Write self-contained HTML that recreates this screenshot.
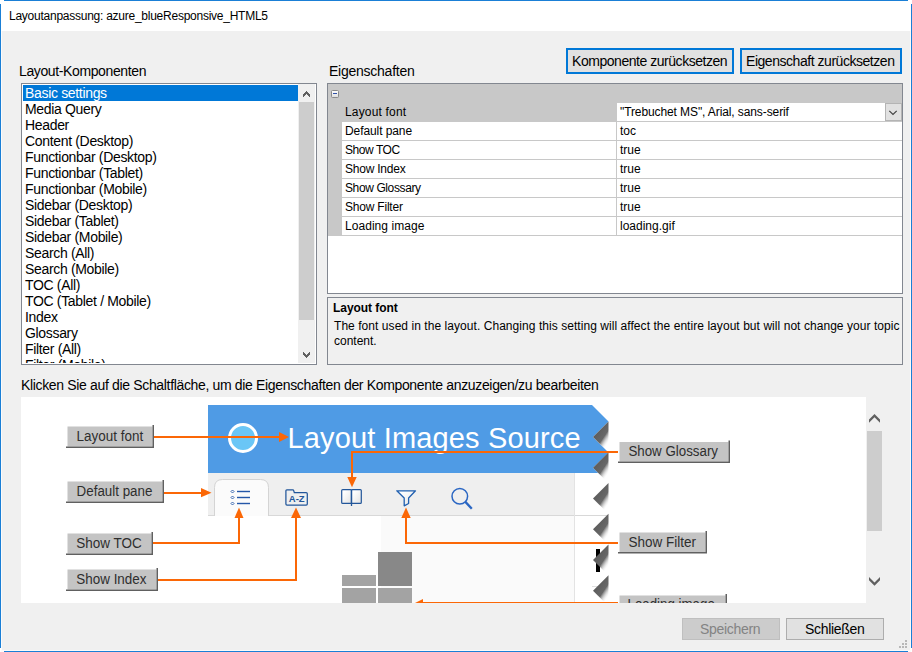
<!DOCTYPE html>
<html><head><meta charset="utf-8">
<style>
*{margin:0;padding:0;box-sizing:border-box}
html,body{width:912px;height:652px;overflow:hidden;background:#f0f0f0}
body{position:relative;font-family:"Liberation Sans",sans-serif;color:#000}
.a{position:absolute}
.t{position:absolute;white-space:pre}
.s12{font-size:12px;line-height:12px}
.s13{font-size:13px;line-height:13px}
.s135{font-size:14px;line-height:14px}
.btn{position:absolute;background:#e1e1e1;border:1px solid #adadad}
.lb{position:absolute;white-space:pre;font-size:14px;line-height:16px;height:16px;left:25px;letter-spacing:-0.33px}
.pr{position:absolute;left:342px;width:560px;height:18px;background:#fff}
.pn{position:absolute;white-space:pre;font-size:12px;line-height:12px;left:345px}
.pv{position:absolute;white-space:pre;font-size:12px;line-height:12px;left:620px}
.lab{position:absolute;background:#c3c3c3;border-top:1px solid #e8e8e8;border-left:1px solid #e8e8e8;border-right:2px solid #5e5e5e;border-bottom:2px solid #5e5e5e;font-size:13px;color:#333;white-space:pre}
</style></head><body>
<!-- window frame -->
<div class="a" style="left:0;top:0;width:912px;height:31px;background:#fff"></div>
<div class="a" style="left:1px;top:31px;width:1px;height:620px;background:#fbfbfb"></div>
<div class="a" style="left:910px;top:31px;width:1px;height:620px;background:#fbfbfb"></div>
<div class="a" style="left:0;top:650px;width:912px;height:2px;background:#fbfbfb"></div>
<div class="a" style="left:0;top:648px;width:1px;height:4px;background:#fff"></div>
<div class="a" style="left:911px;top:648px;width:1px;height:4px;background:#fff"></div>
<div class="a" style="left:4px;top:0;width:904px;height:1px;background:#1a7fd6"></div>
<div class="a" style="left:4px;top:651px;width:904px;height:1px;background:#1a7fd6"></div>
<div class="a" style="left:0;top:4px;width:1px;height:644px;background:#1a7fd6"></div>
<div class="a" style="left:911px;top:4px;width:1px;height:644px;background:#1a7fd6"></div>
<div class="t s12" style="left:9px;top:10px;letter-spacing:-0.25px">Layoutanpassung: azure_blueResponsive_HTML5</div>

<!-- top labels -->
<div class="t s135" style="left:19px;top:64px;letter-spacing:-0.38px">Layout-Komponenten</div>
<div class="t s135" style="left:329px;top:64px;letter-spacing:-0.25px">Eigenschaften</div>

<!-- listbox -->
<div class="a" style="left:21px;top:83px;width:296px;height:282px;border:1px solid #828790;background:#fff;overflow:hidden">
  <div class="a" style="left:1px;top:1px;width:275px;height:16px;background:#0078d7"></div>
</div>
<div id="lbitems" class="a" style="left:0;top:0;width:320px;height:363px;overflow:hidden">
<div class="lb" style="top:85px;color:#fff">Basic settings</div>
<div class="lb" style="top:101px">Media Query</div>
<div class="lb" style="top:117px">Header</div>
<div class="lb" style="top:133px">Content (Desktop)</div>
<div class="lb" style="top:149px">Functionbar (Desktop)</div>
<div class="lb" style="top:165px">Functionbar (Tablet)</div>
<div class="lb" style="top:181px">Functionbar (Mobile)</div>
<div class="lb" style="top:197px">Sidebar (Desktop)</div>
<div class="lb" style="top:213px">Sidebar (Tablet)</div>
<div class="lb" style="top:229px">Sidebar (Mobile)</div>
<div class="lb" style="top:245px">Search (All)</div>
<div class="lb" style="top:261px">Search (Mobile)</div>
<div class="lb" style="top:277px">TOC (All)</div>
<div class="lb" style="top:293px">TOC (Tablet / Mobile)</div>
<div class="lb" style="top:309px">Index</div>
<div class="lb" style="top:325px">Glossary</div>
<div class="lb" style="top:341px">Filter (All)</div>
<div class="lb" style="top:357px">Filter (Mobile)</div>
</div>
<!-- listbox scrollbar -->
<div class="a" style="left:298px;top:84px;width:17px;height:279px;background:#f0f0f0"></div>
<div class="a" style="left:299px;top:102px;width:15px;height:218px;background:#cdcdcd"></div>
<svg class="a" style="left:298px;top:84px" width="17" height="279">
  <g fill="#606060" shape-rendering="crispEdges"><rect x="5" y="10" width="1" height="3"/><rect x="6" y="9" width="1" height="3"/><rect x="7" y="8" width="1" height="3"/><rect x="8" y="7" width="1" height="3"/><rect x="9" y="8" width="1" height="3"/><rect x="10" y="9" width="1" height="3"/><rect x="11" y="10" width="1" height="3"/><rect x="5" y="268" width="1" height="3"/><rect x="6" y="269" width="1" height="3"/><rect x="7" y="270" width="1" height="3"/><rect x="8" y="271" width="1" height="3"/><rect x="9" y="270" width="1" height="3"/><rect x="10" y="269" width="1" height="3"/><rect x="11" y="268" width="1" height="3"/></g>
</svg>

<!-- buttons top -->
<div class="btn" style="left:566px;top:48px;width:168px;height:26px;border:2px solid #0078d7"></div>
<div class="t s135" style="left:572px;top:54px;letter-spacing:-0.46px">Komponente zurücksetzen</div>
<div class="btn" style="left:740px;top:48px;width:162px;height:26px;border:2px solid #0078d7"></div>
<div class="t s135" style="left:746px;top:54px;letter-spacing:-0.46px">Eigenschaft zurücksetzen</div>

<!-- property grid -->
<div class="a" style="left:327px;top:83px;width:576px;height:211px;border:1px solid #828790;background:#fff"></div>
<div class="a" style="left:328px;top:84px;width:574px;height:152px;background:#c8c8c8"></div>
<svg class="a" style="left:330px;top:89px" width="10" height="10">
  <defs><linearGradient id="mg" x1="0" y1="0" x2="0" y2="1"><stop offset="0" stop-color="#fff"/><stop offset="1" stop-color="#dcdcdc"/></linearGradient></defs>
  <rect x="1.5" y="1.5" width="7" height="7" rx="1" fill="url(#mg)" stroke="#8a8a8a"/>
  <line x1="3" y1="4.5" x2="7" y2="4.5" stroke="#3050a8" stroke-width="1"/>
</svg>
<div class="a" style="left:617px;top:103px;width:285px;height:18px;background:#fff"></div>
<div class="pr" style="top:122px"></div>
<div class="pr" style="top:141px"></div>
<div class="pr" style="top:160px"></div>
<div class="pr" style="top:179px"></div>
<div class="pr" style="top:198px"></div>
<div class="pr" style="top:217px"></div>
<div class="a" style="left:616px;top:122px;width:1px;height:113px;background:#c8c8c8"></div>
<div class="pn" style="top:106px;letter-spacing:0.17px">Layout font</div>
<div class="pn" style="top:125px;letter-spacing:-0.09px">Default pane</div>
<div class="pn" style="top:144px;letter-spacing:-0.44px">Show TOC</div>
<div class="pn" style="top:163px;letter-spacing:-0.23px">Show Index</div>
<div class="pn" style="top:182px;letter-spacing:-0.39px">Show Glossary</div>
<div class="pn" style="top:201px;letter-spacing:-0.21px">Show Filter</div>
<div class="pn" style="top:220px;letter-spacing:0.05px">Loading image</div>
<div class="pv" style="top:106px;letter-spacing:-0.1px">"Trebuchet MS", Arial, sans-serif</div>
<div class="pv" style="top:125px">toc</div>
<div class="pv" style="top:144px">true</div>
<div class="pv" style="top:163px">true</div>
<div class="pv" style="top:182px">true</div>
<div class="pv" style="top:201px">true</div>
<div class="pv" style="top:220px">loading.gif</div>
<div class="a" style="left:885px;top:103px;width:17px;height:18px;background:#e1e1e1;border:1px solid #b4b4b4"></div>
<svg class="a" style="left:885px;top:103px" width="17" height="18">
  <polyline points="4.3,7.8 8,11.5 11.7,7.8" fill="none" stroke="#404040" stroke-width="1.15"/>
</svg>

<!-- description -->
<div class="a" style="left:327px;top:297px;width:576px;height:68px;border:1px solid #828790"></div>
<div class="t s12" style="left:333px;top:302px;font-weight:bold;letter-spacing:-0.05px">Layout font</div>
<div class="t s12" style="left:334px;top:320px;letter-spacing:0.055px">The font used in the layout. Changing this setting will affect the entire layout but will not change your topic</div>
<div class="t s12" style="left:334px;top:335px">content.</div>

<div class="t s135" style="left:21px;top:378px;letter-spacing:-0.34px">Klicken Sie auf die Schaltfläche, um die Eigenschaften der Komponente anzuzeigen/zu bearbeiten</div>

<!-- preview panel -->
<svg class="a" style="left:21px;top:397px" width="845" height="206" viewBox="21 397 845 206">
<defs>
 <linearGradient id="tg" gradientUnits="userSpaceOnUse" x1="593" y1="0" x2="606.5" y2="9">
  <stop offset="0" stop-color="#5c5c5c"/><stop offset="0.55" stop-color="#686868"/><stop offset="1" stop-color="#fff" stop-opacity="0"/>
 </linearGradient>
 <polygon id="tooth" points="593,0 608.5,-15.4 608.5,15.4" fill="url(#tg)"/>
 <linearGradient id="pg" x1="0" y1="0" x2="1" y2="1"><stop offset="0.2" stop-color="#fff"/><stop offset="1" stop-color="#e2e2e2"/></linearGradient>
 <marker id="ah" viewBox="0 0 10 10" refX="9" refY="5" markerWidth="10" markerHeight="10" markerUnits="userSpaceOnUse" orient="auto"><path d="M0,0 L10,5 L0,10 z" fill="#fb6706"/></marker>
</defs>
<rect x="21" y="397" width="845" height="206" fill="#fff"/>
<!-- content pane -->
<rect x="208" y="473" width="366" height="42" fill="#efefef"/>
<rect x="381" y="516" width="193" height="87" fill="#fafafa"/>
<line x1="208" y1="515.5" x2="608" y2="515.5" stroke="#d8d8d8"/>
<line x1="574.5" y1="473" x2="574.5" y2="603" stroke="#e3e3e3"/>
<line x1="592" y1="586.5" x2="600" y2="586.5" stroke="#e0e0e0"/>
<path d="M214.5,516 V487.5 Q214.5,479.5 222.5,479.5 H260.5 Q268.5,479.5 268.5,487.5 V516" fill="#fbfbfb" stroke="#d4d4d4"/>
<rect x="596" y="549" width="4" height="23" fill="#000"/>
<!-- header -->
<polygon points="208,405 592,405 608.5,421.6 593,437 608.5,452.4 593,467.75 598.2,473 208,473" fill="#4f9be5"/>
<circle cx="243" cy="438" r="13.5" fill="#6ac6f6" stroke="#fff" stroke-width="3"/>
<text x="287.5" y="448" font-family="Liberation Sans" font-size="29" fill="#fff" letter-spacing="0.15">Layout Images Source</text>
<!-- teeth -->
<use href="#tooth" y="437"/><use href="#tooth" y="467.75"/><use href="#tooth" y="498.5"/><use href="#tooth" y="529.25"/><use href="#tooth" y="560"/><use href="#tooth" y="590.75"/>
<!-- icons -->
<g stroke="#2557a8" fill="none" stroke-width="1.3">
 <line x1="237" y1="491.5" x2="250" y2="491.5" stroke-width="1.4"/><line x1="237" y1="497.5" x2="250" y2="497.5" stroke-width="1.4"/><line x1="237" y1="503.5" x2="250" y2="503.5" stroke-width="1.4"/>
 <path d="M232.5,490 L234,491.5 L232.5,493 L231,491.5 Z M232.5,496 L234,497.5 L232.5,499 L231,497.5 Z M232.5,502 L234,503.5 L232.5,505 L231,503.5 Z" stroke-width="0.9"/>
 <path d="M286.8,489.8 H292.8 Q293.5,489.8 293.7,490.6 L294.3,492.6 H306.2 Q307.3,492.6 307.3,493.8 V504 Q307.3,505.1 306.2,505.1 H287 Q285.9,505.1 285.9,504 V490.8 Q285.9,489.8 286.8,489.8 Z" stroke-width="1.25" stroke="#22569a"/>
 <rect x="341.7" y="489.6" width="9.8" height="13.8" rx="1" fill="url(#pg)" stroke="#22569a" stroke-width="1.2"/>
 <rect x="351.5" y="489.6" width="9.8" height="13.8" rx="1" fill="url(#pg)" stroke="#22569a" stroke-width="1.2"/>
 <line x1="351.5" y1="489.6" x2="351.5" y2="506" stroke="#22569a" stroke-width="1.3"/>
</g>
<text x="288.8" y="501.9" font-family="Liberation Sans" font-size="9.5" font-weight="bold" fill="#22569a" letter-spacing="0">A-Z</text>
<g stroke="#2a66c3" fill="none" stroke-width="1.7">
 <path d="M396.8,490.8 H415.5 L408.6,498 V503.5 L404.2,505.8 V498 Z" stroke-linejoin="round" fill="url(#pg)" stroke="#2160b0" stroke-width="1.3"/>
 <circle cx="459.8" cy="496.3" r="7.8" stroke-width="1.5"/>
 <line x1="465.4" y1="501.9" x2="471.8" y2="508.8" stroke-width="2.3"/>
</g>
<!-- loading image -->
<rect x="342" y="575" width="34" height="11" fill="#a3a3a3"/>
<rect x="378" y="552" width="34" height="34" fill="#888"/>
<rect x="342" y="588" width="34" height="16" fill="#a3a3a3"/>
<rect x="378" y="588" width="34" height="16" fill="#a3a3a3"/>
<!-- labels -->
<rect x="67.5" y="426.5" width="85" height="20" fill="#c4c4c4"/><polyline points="66,447.25 153.25,447.25 153.25,425" fill="none" stroke="#606060" stroke-width="1.5"/><text x="76.6" y="440.9" textLength="66.6" lengthAdjust="spacingAndGlyphs" font-family="Liberation Sans" font-size="14" fill="#2e2e2e">Layout font</text>
<rect x="67.5" y="481.5" width="95" height="20" fill="#c4c4c4"/><polyline points="66,502.25 163.25,502.25 163.25,480" fill="none" stroke="#606060" stroke-width="1.5"/><text x="76.6" y="495.9" textLength="75.8" lengthAdjust="spacingAndGlyphs" font-family="Liberation Sans" font-size="14" fill="#2e2e2e">Default pane</text>
<rect x="67.5" y="533.5" width="84" height="20" fill="#c4c4c4"/><polyline points="66,554.25 152.25,554.25 152.25,532" fill="none" stroke="#606060" stroke-width="1.5"/><text x="76.3" y="547.9" textLength="65.5" lengthAdjust="spacingAndGlyphs" font-family="Liberation Sans" font-size="14" fill="#2e2e2e">Show TOC</text>
<rect x="67.5" y="569.5" width="89" height="20" fill="#c4c4c4"/><polyline points="66,590.25 157.25,590.25 157.25,568" fill="none" stroke="#606060" stroke-width="1.5"/><text x="76.3" y="583.9" textLength="70.2" lengthAdjust="spacingAndGlyphs" font-family="Liberation Sans" font-size="14" fill="#2e2e2e">Show Index</text>
<rect x="619.5" y="442.0" width="109" height="19.5" fill="#c4c4c4"/><polyline points="618,462.25 729.25,462.25 729.25,440.5" fill="none" stroke="#606060" stroke-width="1.5"/><text x="628.4" y="455.9" textLength="89.6" lengthAdjust="spacingAndGlyphs" font-family="Liberation Sans" font-size="14" fill="#2e2e2e">Show Glossary</text>
<rect x="619.5" y="532.5" width="86" height="19.5" fill="#c4c4c4"/><polyline points="618,552.75 706.25,552.75 706.25,531" fill="none" stroke="#606060" stroke-width="1.5"/><text x="628.4" y="547.0" textLength="67.5" lengthAdjust="spacingAndGlyphs" font-family="Liberation Sans" font-size="14" fill="#2e2e2e">Show Filter</text>
<rect x="619.5" y="595.5" width="106" height="20" fill="#c4c4c4"/><polyline points="618,616.25 726.25,616.25 726.25,594" fill="none" stroke="#606060" stroke-width="1.5"/><text x="627.5" y="609.1" textLength="87.3" lengthAdjust="spacingAndGlyphs" font-family="Liberation Sans" font-size="14" fill="#2e2e2e">Loading image</text>
<!-- arrows -->
<g stroke="#fb6706" stroke-width="2" fill="none">
 <line x1="154" y1="437" x2="281" y2="437"/>
 <line x1="164" y1="493" x2="203" y2="493"/>
 <polyline points="153,543 239,543 239,516"/>
 <polyline points="158,580 296,580 296,516"/>
 <polyline points="618,452 352,452 352,479"/>
 <polyline points="618,543 406,543 406,516"/>
 <line x1="618" y1="603" x2="422" y2="603"/>
</g>
<g fill="#fb6706">
 <path d="M279,432 L289,437 L279,442 Z"/>
 <path d="M201,488 L211.5,492.7 L201,497.3 Z"/>
 <path d="M234.5,518 L239,507.5 L243.5,518 Z"/>
 <path d="M291,518 L296,507.5 L301,518 Z"/>
 <path d="M347.3,477 L352,487.2 L356.7,477 Z"/>
 <path d="M401.3,518 L406,507.5 L410.7,518 Z"/>
 <path d="M415,603 L423,599 L423,603 Z"/>
</g>
</svg>

<!-- preview scrollbar -->
<svg class="a" style="left:866px;top:397px" width="17" height="206">
  <rect x="1" y="34" width="15" height="100" fill="#cdcdcd"/>
  <polygon points="3,22.5 8.5,17 14,22.5 14,25.8 8.5,20.3 3,25.8" fill="#606060"/>
  <polygon points="3,180 8.5,185.5 14,180 14,183.3 8.5,188.8 3,183.3" fill="#606060"/>
</svg>

<!-- bottom buttons -->
<div class="a" style="left:682px;top:618px;width:98px;height:22px;background:#cccccc;border:1px solid #bfbfbf"></div>
<div class="t s135" style="left:700px;top:622px;color:#838383;letter-spacing:-0.3px">Speichern</div>
<div class="btn" style="left:786px;top:618px;width:98px;height:22px"></div>
<div class="t s135" style="left:805px;top:622px;letter-spacing:-0.3px">Schließen</div>
<svg class="a" style="left:897px;top:638px" width="12" height="12">
  <g fill="#b8b8b8"><rect x="8" y="2" width="2" height="2"/><rect x="5" y="5" width="2" height="2"/><rect x="8" y="5" width="2" height="2"/><rect x="2" y="8" width="2" height="2"/><rect x="5" y="8" width="2" height="2"/><rect x="8" y="8" width="2" height="2"/></g>
</svg>
</body></html>
